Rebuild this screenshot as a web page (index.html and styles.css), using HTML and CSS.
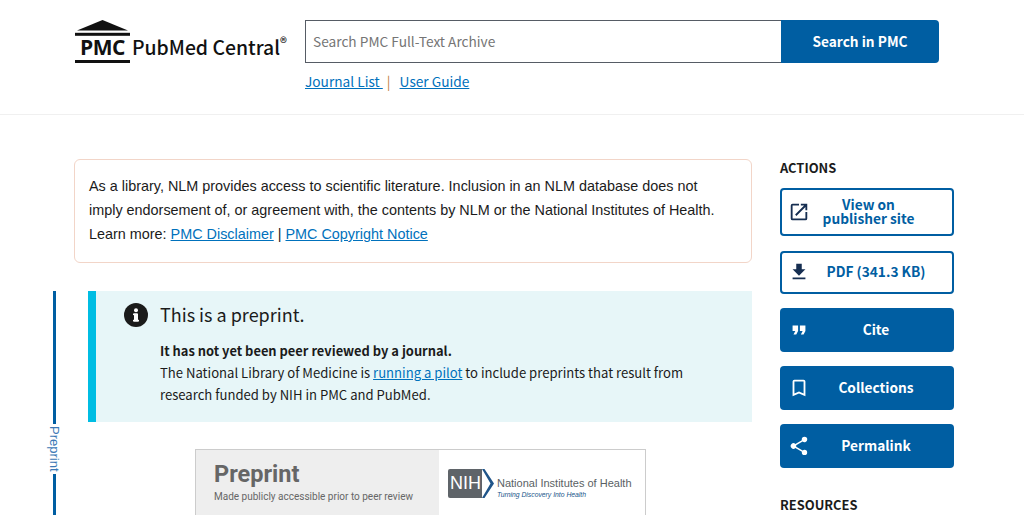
FILE: index.html
```html
<!DOCTYPE html>
<html lang="en">

<head>
    <meta charset="UTF-8">
    <meta name="viewport" content="width=device-width, initial-scale=1.0">
    <title>PubMed Central</title>
    <link rel="stylesheet" href="styles.css">
</head>

<body>
    <header class="site-head">
        <a class="logo" href="#">
            <span class="logo-mark">
                <svg class="logo-roof" width="55" height="16" viewBox="0 0 55 16">
                    <path d="M27.5 0 L53 10.6 L2 10.6 Z" fill="#111"/>
                    <rect x="0" y="12.8" width="55" height="3" fill="#111"/>
                </svg>
                <span class="logo-pmc">PMC</span>
            </span>
            <span class="logo-name">PubMed Central<sup>®</sup></span>
        </a>
        <div class="search-wrap">
            <form class="search">
                <input class="search-input" type="text" placeholder="Search PMC Full-Text Archive">
                <button class="search-btn" type="button">Search in PMC</button>
            </form>
            <div class="search-links">
                <a href="#">Journal List </a>
                <span class="sep">|</span>
                <a href="#">User Guide</a>
            </div>
        </div>
    </header>

    <main class="page">
        <div class="content">
            <div class="notice">
                As a library, NLM provides access to scientific literature. Inclusion in an NLM database does not
                imply endorsement of, or agreement with, the contents by NLM or the National Institutes of Health.<br>
                Learn more: <a href="#">PMC Disclaimer</a> | <a href="#">PMC Copyright Notice</a>
            </div>

            <section class="preprint">
                <div class="rail">
                    <span class="rail-line rail-top"></span>
                    <span class="rail-label">Preprint</span>
                    <span class="rail-line rail-bottom"></span>
                </div>
                <div class="preprint-body">
                    <div class="alert">
                        <svg class="alert-icon" width="24" height="24" viewBox="0 0 24 24">
                            <circle cx="12" cy="12" r="12" fill="#1b1b1b"/>
                            <rect x="10" y="10.5" width="4" height="8" fill="#fff"/>
                            <rect x="9" y="10.5" width="4" height="1.6" fill="#fff"/>
                            <rect x="9" y="16.8" width="6" height="1.7" fill="#fff"/>
                            <circle cx="12" cy="7.2" r="2" fill="#fff"/>
                        </svg>
                        <div class="alert-text">
                            <h2 class="alert-title">This is a preprint.</h2>
                            <p><b>It has not yet been peer reviewed by a journal.</b><br>
                                The National Library of Medicine is <a href="#">running a pilot</a> to include preprints that result from
                                research funded by NIH in PMC and PubMed.</p>
                        </div>
                    </div>

                    <div class="banner">
                        <div class="banner-left">
                            <div class="banner-title">Preprint</div>
                            <div class="banner-sub">Made publicly accessible prior to peer review</div>
                        </div>
                        <div class="banner-right">
                            <span class="nih-mark">
                                <span class="nih-box">NIH</span>
                                <svg width="12" height="29" viewBox="0 0 12 29">
                                    <path d="M0 0 H2.5 L12 14.5 L2.5 29 H0 L8.5 14.5 Z" fill="#20558a"/>
                                </svg>
                            </span>
                            <span class="nih-text">
                                <span class="nih-name">National Institutes of Health</span>
                                <span class="nih-tag">Turning Discovery Into Health</span>
                            </span>
                        </div>
                    </div>
                </div>
            </section>
        </div>

        <aside class="sidebar">
            <h3 class="side-title">ACTIONS</h3>
            <a class="action outline tall" href="#">
                <svg class="action-icon" width="22" height="22" viewBox="0 0 24 24">
                    <path d="M19 19H5V5h7V3H5a2 2 0 0 0-2 2v14a2 2 0 0 0 2 2h14a2 2 0 0 0 2-2v-7h-2v7zM14 3v2h3.59l-9.83 9.83 1.41 1.41L19 6.41V10h2V3h-7z" fill="#162e51"/>
                </svg>
                <span class="action-text">View on<br>publisher site</span>
            </a>
            <a class="action outline" href="#">
                <svg class="action-icon" width="22" height="22" viewBox="0 0 24 24">
                    <path d="M19 9h-4V3H9v6H5l7 7 7-7zM5 18v2h14v-2H5z" fill="#162e51"/>
                </svg>
                <span class="action-text">PDF (341.3 KB)</span>
            </a>
            <a class="action solid" href="#">
                <svg class="action-icon" width="22" height="22" viewBox="0 0 24 24">
                    <path d="M6 17h3l2-4V7H5v6h3zm8 0h3l2-4V7h-6v6h3z" fill="#fff"/>
                </svg>
                <span class="action-text">Cite</span>
            </a>
            <a class="action solid" href="#">
                <svg class="action-icon" width="22" height="22" viewBox="0 0 24 24">
                    <path d="M17 3H7a2 2 0 0 0-2 2v16l7-3 7 3V5a2 2 0 0 0-2-2zm0 15-5-2.18L7 18V5h10v13z" fill="#fff"/>
                </svg>
                <span class="action-text">Collections</span>
            </a>
            <a class="action solid" href="#">
                <svg class="action-icon" width="22" height="22" viewBox="0 0 24 24">
                    <path d="M18 16.08c-.76 0-1.44.3-1.96.77L8.91 12.7c.05-.23.09-.46.09-.7s-.04-.47-.09-.7l7.05-4.11A2.99 2.99 0 0 0 21 5a3 3 0 0 0-6 0c0 .24.04.47.09.7L8.04 9.81A3 3 0 1 0 8.04 14.19l7.12 4.16c-.05.21-.08.43-.08.65a2.92 2.92 0 1 0 2.92-2.92z" fill="#fff"/>
                </svg>
                <span class="action-text">Permalink</span>
            </a>
            <h3 class="side-title side-title-next">RESOURCES</h3>
        </aside>
    </main>
</body>

</html>
```

FILE: styles.css
```css
html,
body {
    height: 515px;
    overflow: hidden;
}

body {
    margin: 0;
    background: #fff;
    color: #1b1b1b;
    font-family: "Noto Sans CJK SC", "Source Sans Pro", sans-serif;
    font-size: 13.7px;
}

a {
    color: #0071bc;
}

/* header */
.site-head {
    display: flex;
    align-items: flex-start;
    box-sizing: border-box;
    height: 115px;
    padding: 20px 0 0 75px;
    border-bottom: 1px solid #f0f0f0;
}

.logo {
    display: flex;
    align-items: flex-end;
    width: 230px;
    height: 43px;
    color: #111;
    text-decoration: none;
}

.logo-mark {
    display: flex;
    flex-direction: column;
    width: 55px;
    height: 43px;
}

.logo-roof {
    display: block;
    flex: none;
}

.logo-pmc {
    height: 24px;
    border-bottom: 3px solid #111;
    font-family: "Open Sans", sans-serif;
    font-size: 21px;
    font-weight: 700;
    line-height: 23px;
    letter-spacing: -0.4px;
    text-align: center;
}

.logo-name {
    margin: 0 0 4px 2px;
    font-size: 19.4px;
    font-weight: 500;
    line-height: 24px;
    white-space: nowrap;
}

.logo-name sup {
    font-size: 14px;
    line-height: 0;
}

.search {
    display: flex;
    width: 634px;
    height: 43px;
}

.search-input {
    flex: 1;
    min-width: 0;
    box-sizing: border-box;
    height: 43px;
    padding: 0 7px 2px;
    border: 1px solid #565c65;
    border-right: 0;
    outline: 0;
    font-family: inherit;
    font-size: 13.7px;
}

.search-input::placeholder {
    color: #757575;
    opacity: 1;
}

.search-btn {
    width: 158px;
    height: 43px;
    padding: 0 0 2px;
    border: 0;
    border-radius: 0 4px 4px 0;
    background: #005ea2;
    color: #fff;
    font-family: inherit;
    font-size: 13.7px;
    font-weight: 700;
}

.search-links {
    margin-top: 7px;
    line-height: 22px;
    color: #71767a;
}

.sep {
    margin: 0 6px 0 4px;
    color: #c08040;
}

/* main */
.page {
    display: flex;
    align-items: flex-start;
    gap: 28px;
    padding: 44px 0 0 53px;
}

.content {
    width: 699px;
}

.notice {
    box-sizing: border-box;
    height: 104px;
    margin-left: 21px;
    padding: 14px 27px 14px 14px;
    border: 1px solid #f2d5c8;
    border-radius: 6px;
    font-family: "Liberation Sans", Arial, sans-serif;
    font-size: 14.4px;
    line-height: 24px;
}

.preprint {
    display: flex;
    margin-top: 28px;
}

.rail {
    display: flex;
    flex-direction: column;
    align-items: flex-start;
    width: 35px;
    flex: none;
}

.rail-line {
    width: 3px;
    background: #005ea2;
}

.rail-top {
    height: 133px;
}

.rail-bottom {
    height: 60px;
}

.rail-label {
    margin: 2px 0 2px -5px;
    writing-mode: vertical-rl;
    color: #3b78b5;
    font-family: "Liberation Sans", Arial, sans-serif;
    font-size: 13px;
    line-height: 12px;
}

.preprint-body {
    flex: 1;
    min-width: 0;
}

.alert {
    display: flex;
    gap: 12px;
    box-sizing: border-box;
    height: 131px;
    padding: 12px 40px 0 28px;
    border-left: 8px solid #00bde3;
    background: #e7f6f8;
}

.alert-icon {
    flex: none;
}

.alert-title {
    margin: -1px 0 0;
    font-size: 18px;
    font-weight: 400;
    line-height: 25px;
}

.alert-text p {
    margin: 13px 0 0;
    font-size: 13.1px;
    line-height: 22px;
}

.alert-text b {
    font-size: 12.9px;
}

.banner {
    display: flex;
    width: 451px;
    height: 100px;
    box-sizing: border-box;
    margin: 27px 0 0 107px;
    border: 1px solid #ccc;
}

.banner-left {
    width: 243px;
    padding: 11px 0 0 18px;
    box-sizing: border-box;
    background: #eee;
    color: #666;
    font-family: Roboto, sans-serif;
}

.banner-title {
    font-size: 23.5px;
    font-weight: 700;
    line-height: 26px;
}

.banner-sub {
    margin-top: 3px;
    font-size: 10px;
    font-weight: 400;
    line-height: 14px;
}

.banner-right {
    display: flex;
    align-items: flex-start;
    gap: 3px;
    padding: 19px 0 0 9px;
}

.nih-mark {
    display: flex;
}

.nih-box {
    display: block;
    width: 32px;
    height: 29px;
    padding-left: 2px;
    background: #5f6469;
    border-radius: 2px 0 0 2px;
    color: #fff;
    font-family: "Liberation Sans", Arial, sans-serif;
    font-size: 18px;
    line-height: 29px;
}

.nih-text {
    display: flex;
    flex-direction: column;
    padding-top: 8px;
    font-family: "Liberation Sans", Arial, sans-serif;
}

.nih-name {
    color: #5a5f64;
    font-size: 11px;
    line-height: 13px;
    white-space: nowrap;
}

.nih-tag {
    color: #20558a;
    font-size: 6.8px;
    font-style: italic;
    line-height: 9px;
    white-space: nowrap;
}

/* sidebar */
.sidebar {
    width: 174px;
    flex: none;
}

.side-title {
    margin: 0 0 11px;
    font-size: 12.9px;
    font-weight: 700;
    line-height: 18px;
}

.side-title-next {
    margin-top: 28px;
}

.action {
    display: flex;
    align-items: center;
    box-sizing: border-box;
    height: 43.5px;
    margin-bottom: 14.5px;
    padding: 0 6px;
    border-radius: 4px;
    font-size: 13.7px;
    font-weight: 700;
    line-height: 14px;
    text-align: center;
    text-decoration: none;
}

.outline {
    height: 43px;
    border: 2px solid #005ea2;
    background: #fff;
    color: #005ea2;
}

.action.tall {
    height: 48px;
}

.solid {
    background: #005ea2;
    color: #fff;
    padding: 0 8px;
}

.action-icon {
    flex: none;
}

.action-text {
    flex: 1;
    padding: 0 4px 2px 0;
}

.tall .action-text {
    padding-right: 19px;
}
```
